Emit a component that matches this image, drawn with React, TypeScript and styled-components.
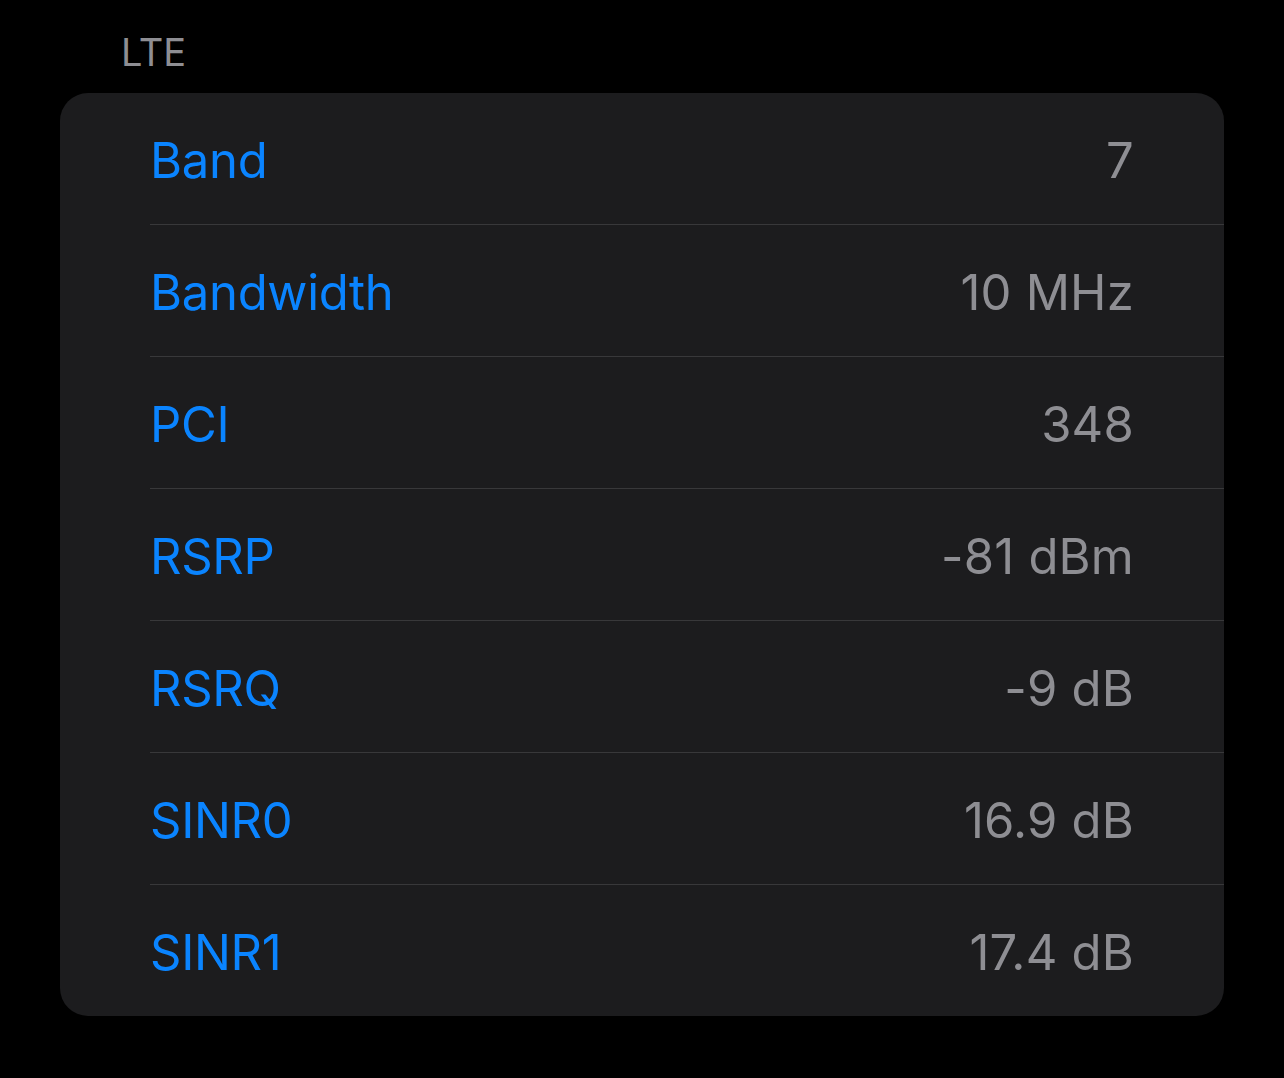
import styled, { createGlobalStyle } from "styled-components";

const GlobalStyle = createGlobalStyle`
  html, body {
    margin: 0;
    padding: 0;
    background: #000000;
  }
  body {
    font-family: Inter, "Noto Sans", "Liberation Sans", sans-serif;
    -webkit-font-smoothing: antialiased;
  }
`;

const rows = [
  { label: "Band", value: "7" },
  { label: "Bandwidth", value: "10 MHz" },
  { label: "PCI", value: "348" },
  { label: "RSRP", value: "-81 dBm" },
  { label: "RSRQ", value: "-9 dB" },
  { label: "SINR0", value: "16.9 dB" },
  { label: "SINR1", value: "17.4 dB" },
];

const Page = styled.div`
  width: 1284px;
  height: 1078px;
  padding: 26px 60px 0 60px;
  box-sizing: border-box;
  display: flex;
  flex-direction: column;
`;

const SectionHeader = styled.div`
  padding-left: 61px;
  height: 67px;
  font-size: 38px;
  line-height: 52px;
  color: #8e8e93;
  font-weight: 400;
`;

const Card = styled.div`
  background: #1c1c1e;
  border-radius: 28px;
  width: 1164px;
  overflow: hidden;
  padding-left: 90px;
  box-sizing: border-box;
`;

const Row = styled.div<{ $last?: boolean }>`
  height: 128px;
  padding-top: 3px;
  display: flex;
  align-items: center;
  justify-content: space-between;
  padding-right: 90px;
  border-bottom: ${(p) => (p.$last ? "none" : "1px solid #38383a")};
`;

const Label = styled.span`
  font-size: 49px;
  letter-spacing: -0.3px;
  color: #0a84ff;
`;

const Value = styled.span`
  font-size: 49px;
  letter-spacing: 0.2px;
  color: #8e8e93;
`;

export default function App() {
  return (
    <Page>
      <GlobalStyle />
      <SectionHeader>LTE</SectionHeader>
      <Card>
        {rows.map((r, i) => (
          <Row key={r.label} $last={i === rows.length - 1}>
            <Label>{r.label}</Label>
            <Value>{r.value}</Value>
          </Row>
        ))}
      </Card>
    </Page>
  );
}
